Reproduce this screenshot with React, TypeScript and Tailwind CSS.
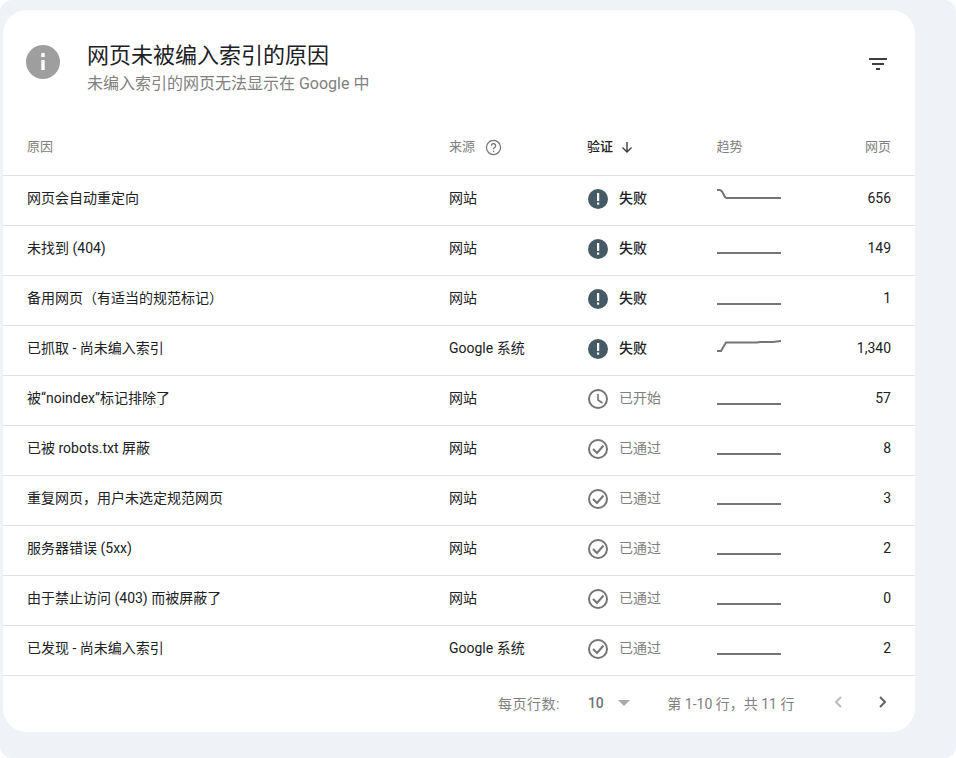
const rows = [
  { reason: "网页会自动重定向", source: "网站", status: "fail", trend: "M0 2 H3 L5 3.5 L8 9 L9.5 10 H64", pages: "656" },
  { reason: "未找到 (404)", source: "网站", status: "fail", trend: "M0 15 H64", pages: "149" },
  { reason: "备用网页（有适当的规范标记）", source: "网站", status: "fail", trend: "M0 16 H64", pages: "1" },
  { reason: "已抓取 - 尚未编入索引", source: "Google 系统", status: "fail", trend: "M0 13 H4 L9 4.5 H40 L43 4 H56 L64 3", pages: "1,340" },
  { reason: "被“noindex”标记排除了", source: "网站", status: "start", trend: "M0 16 H64", pages: "57" },
  { reason: "已被 robots.txt 屏蔽", source: "网站", status: "pass", trend: "M0 16 H64", pages: "8" },
  { reason: "重复网页，用户未选定规范网页", source: "网站", status: "pass", trend: "M0 16 H64", pages: "3" },
  { reason: "服务器错误 (5xx)", source: "网站", status: "pass", trend: "M0 16 H64", pages: "2" },
  { reason: "由于禁止访问 (403) 而被屏蔽了", source: "网站", status: "pass", trend: "M0 16 H64", pages: "0" },
  { reason: "已发现 - 尚未编入索引", source: "Google 系统", status: "pass", trend: "M0 16 H64", pages: "2" },
];

function FailIcon() {
  return (
    <svg width="20" height="20" viewBox="0 0 20 20" className="mt-[1px] ml-[1px]">
      <circle cx="10" cy="10" r="10" fill="#455a64" />
      <rect x="9" y="4" width="2.2" height="8" fill="#fff" />
      <rect x="9" y="13.5" width="2.2" height="2.2" fill="#fff" />
    </svg>
  );
}

function ClockIcon() {
  return (
    <svg width="20" height="20" viewBox="0 0 20 20" fill="none" stroke="#757575" strokeWidth="2" className="mt-[1px] ml-[1px]">
      <circle cx="10" cy="10" r="9" />
      <path d="M10 5 V11 L14.5 14" strokeWidth="1.6" />
    </svg>
  );
}

function CheckIcon() {
  return (
    <svg width="20" height="20" viewBox="0 0 20 20" fill="none" stroke="#757575" strokeWidth="2" className="mt-[1px] ml-[1px]">
      <circle cx="10" cy="10" r="9" />
      <path d="M5 10 L9 14 L15.5 6.5" />
    </svg>
  );
}

function Status({ status }: { status: string }) {
  if (status === "fail") {
    return (
      <div className="flex items-start gap-[11px]">
        <FailIcon />
        <span className="font-medium text-[#202124]">失败</span>
      </div>
    );
  }
  return (
    <div className="flex items-start gap-[11px]">
      {status === "start" ? <ClockIcon /> : <CheckIcon />}
      <span className="text-[#808080]">{status === "start" ? "已开始" : "已通过"}</span>
    </div>
  );
}

function Trend({ d }: { d: string }) {
  return (
    <svg width="64" height="21" viewBox="0 0 64 21" fill="none">
      <path d={d} stroke="#757575" strokeWidth="2" />
    </svg>
  );
}

export default function App() {
  return (
    <div className="w-[956px] h-[758px] bg-[#eff3f8] rounded-[12px] pl-[3px] pt-[10px] overflow-hidden font-['Roboto','Noto_Sans_CJK_SC',sans-serif] text-[14px] text-[#202124]">
      <div className="w-[912px] h-[722px] bg-white rounded-[24px] flex flex-col">
        <div className="flex items-start h-[109px] pl-[23px] pr-[25px] pt-[35px]">
          <div className="w-[34px] h-[34px] rounded-full bg-[#9e9e9e] flex items-center justify-center">
            <svg width="34" height="34" viewBox="0 0 34 34">
              <rect x="15.3" y="8" width="3.4" height="4" fill="#fff" />
              <rect x="15.3" y="15" width="3.4" height="10" fill="#fff" />
            </svg>
          </div>
          <div className="ml-[27px] mt-[-4px]">
            <div className="text-[22px] leading-[30px]">网页未被编入索引的原因</div>
            <div className="text-[16px] leading-[24px] text-[#808080] mt-[1px]">未编入索引的网页无法显示在 Google 中</div>
          </div>
          <svg width="24" height="24" viewBox="0 0 24 24" className="ml-auto mt-[7px]" fill="#3c4043">
            <path d="M3 6 H21 V8 H3 Z M6 11 H18 V13 H6 Z M10 16 H14 V18 H10 Z" />
          </svg>
        </div>

        <div className="grid grid-cols-[422px_138px_130px_1fr] items-center h-[57px] pl-[24px] pr-[25px] border-b border-[#e0e0e0] text-[13px] text-[#808080]">
          <div>原因</div>
          <div className="flex items-center gap-[10px]">
            来源
            <svg width="17" height="17" viewBox="0 0 24 24" fill="none" stroke="#757575" strokeWidth="1.8">
              <circle cx="12" cy="12" r="10" />
              <path d="M9 9.5 a3 3 0 1 1 4.5 2.6 c-1 .6 -1.5 1.2 -1.5 2.4" />
              <path d="M12 16.5 v2" />
            </svg>
          </div>
          <div className="flex items-center gap-[6px] font-medium text-[#202124]">
            验证
            <svg width="16" height="16" viewBox="0 0 16 16" fill="none" stroke="#3c4043" strokeWidth="1.4">
              <path d="M8 3 V13 M3.5 8.5 L8 13 L12.5 8.5" />
            </svg>
          </div>
          <div className="flex justify-between">
            <span className="ml-[-0.5px]">趋势</span>
            <span className="mr-[-1px]">网页</span>
          </div>
        </div>

        {rows.map((r, i) => (
          <div
            key={i}
            className="grid grid-cols-[422px_138px_130px_1fr] items-center h-[50px] pl-[24px] pr-[24px] pb-[4px] border-b border-[#e0e0e0]"
          >
            <div>{r.reason}</div>
            <div>{r.source}</div>
            <Status status={r.status} />
            <div className="flex items-center justify-between">
              <Trend d={r.trend} />
              <span>{r.pages}</span>
            </div>
          </div>
        ))}

        <div className="flex items-center flex-1 pl-[495px] text-[14px] text-[#808080]">
          <span className="tracking-[0.5px]">每页行数:</span>
          <span className="ml-[28px] mb-[2px] font-medium text-[#70757a]">10</span>
          <svg width="14" height="8" viewBox="0 0 14 8" className="ml-[13px] mb-[2px]" fill="#aaaaaa">
            <path d="M1 1 H13 L7 7 Z" />
          </svg>
          <span className="ml-[36.5px]">第 1-10 行，共 11 行</span>
          <svg width="10" height="14" viewBox="0 0 10 14" fill="none" stroke="#bdbdbd" strokeWidth="2" className="ml-[39px] mb-[4px]">
            <path d="M8 2 L3 7 L8 12" />
          </svg>
          <svg width="10" height="14" viewBox="0 0 10 14" fill="none" stroke="#5f6368" strokeWidth="2" className="ml-[35px] mb-[4px]">
            <path d="M2 2 L7 7 L2 12" />
          </svg>
        </div>
      </div>
    </div>
  );
}
